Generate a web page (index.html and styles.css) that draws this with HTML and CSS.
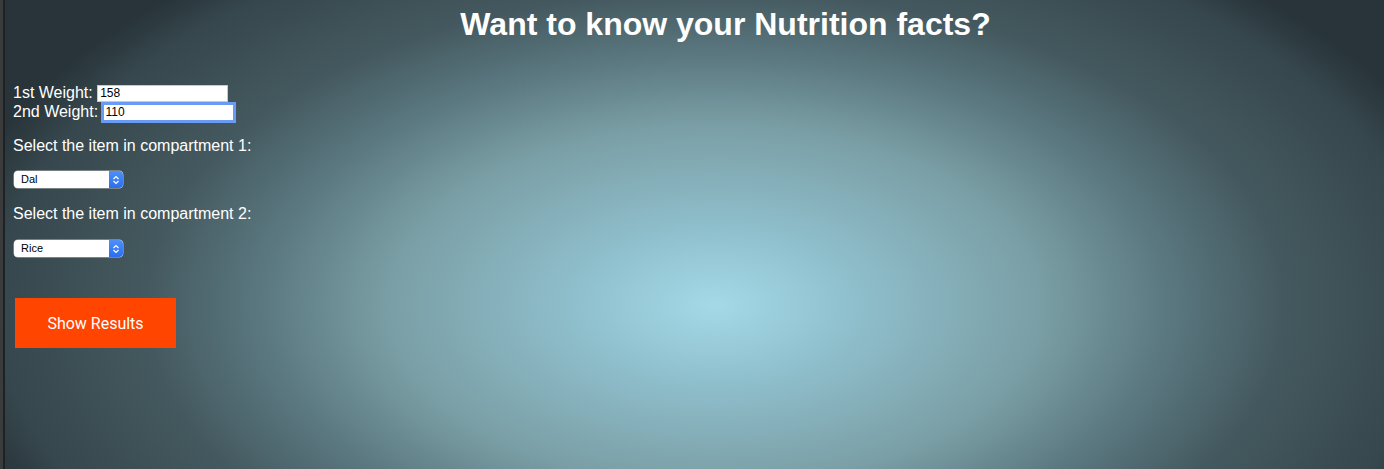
FILE: index.html
```html
<!DOCTYPE html>
<html>
<head>
<meta charset="utf-8">
<link rel="stylesheet" href="styles.css">
</head>
<body>
<div class="frame">
  <h1 class="title">Want to know your Nutrition facts?</h1>
  <form class="form">
    <div class="weights">
      <label>1st Weight: <input class="weight" type="text" value="158"></label><br>
      <label>2nd Weight: <input class="weight focused" type="text" value="110"></label>
    </div>
    <p class="prompt first">Select the item in compartment 1:</p>
    <div class="select-wrap"><span class="select"><span class="select-text">Dal</span><span class="select-btn"><svg width="8" height="10" viewBox="0 0 8 10"><path d="M1.5 4 L4 1.5 L6.5 4 M1.5 6 L4 8.5 L6.5 6" fill="none" stroke="#fff" stroke-width="1.2"/></svg></span></span></div>
    <p class="prompt second">Select the item in compartment 2:</p>
    <div class="select-wrap"><span class="select"><span class="select-text">Rice</span><span class="select-btn"><svg width="8" height="10" viewBox="0 0 8 10"><path d="M1.5 4 L4 1.5 L6.5 4 M1.5 6 L4 8.5 L6.5 6" fill="none" stroke="#fff" stroke-width="1.2"/></svg></span></span></div>
    <button type="button" class="show-btn">Show Results</button>
  </form>
</div>
</body>
</html>
```
FILE: styles.css
```css
html, body {
  margin: 0;
  padding: 0;
  height: 100%;
}
body {
  font-family: "Liberation Sans", Arial, sans-serif;
  color: #fff;
  background: #182024;
  overflow: hidden;
}
.frame {
  height: 469px;
  box-sizing: border-box;
  border-left: 3px solid #3a3c3c;
  box-shadow: inset 2px 0 0 #1c2225;
  padding: 0 8px 0 10px;
  background: radial-gradient(ellipse 780px 430px at 712px 305px,
    #a4d9e7 0%, #8fbfcc 18%, #7a9ea5 42%, #5b7880 58%, #44595f 73%, #36474d 92%, #283439 100%);
  background-color: #1b2427;
}
.title {
  margin: 0;
  padding: 6px 0 0 62px;
  text-align: center;
  font-size: 32px;
  font-weight: bold;
  line-height: 37px;
}
.form {
  margin-top: 40px;
  font-size: 16px;
}
.weights {
  line-height: 19px;
}
.weight {
  width: 131px;
  height: 17px;
  box-sizing: border-box;
  border: 1px solid #c9c9c9;
  padding: 0 2px;
  font-family: "Liberation Sans", Arial, sans-serif;
  font-size: 12px;
  color: #000;
  background: #fff;
  vertical-align: 1px;
  margin: 0;
}
.weight.focused {
  outline: 3px solid #6a9bf4;
  outline-offset: -1px;
  border-color: #3f78ea;
}
.prompt {
  margin: 16px 0 0;
  line-height: 18px;
}
.prompt.second {
  margin-top: 19px;
}
.select-wrap {
  margin-top: 14px;
  height: 17px;
}
.second + .select-wrap {
  margin-top: 15px;
}
.select {
  display: inline-flex;
  width: 109px;
  height: 17px;
  margin-left: 1px;
  background: #fff;
  border-radius: 4px;
  box-shadow: 0 0 0 0.5px #b8b8b8;
  overflow: hidden;
  color: #000;
  font-size: 11px;
}
.select-text {
  flex: 1;
  padding-left: 7px;
  line-height: 17px;
}
.select-btn {
  width: 14px;
  background: linear-gradient(#4f8ff7, #2a6ef0);
  display: flex;
  align-items: center;
  justify-content: center;
}
.show-btn {
  display: block;
  margin: 43px 0 0 2px;
  width: 161px;
  height: 50px;
  border: 0;
  background: #ff4500;
  color: #fff;
  font-family: Roboto, "Liberation Sans", sans-serif;
  font-size: 16px;
  cursor: pointer;
}
```
